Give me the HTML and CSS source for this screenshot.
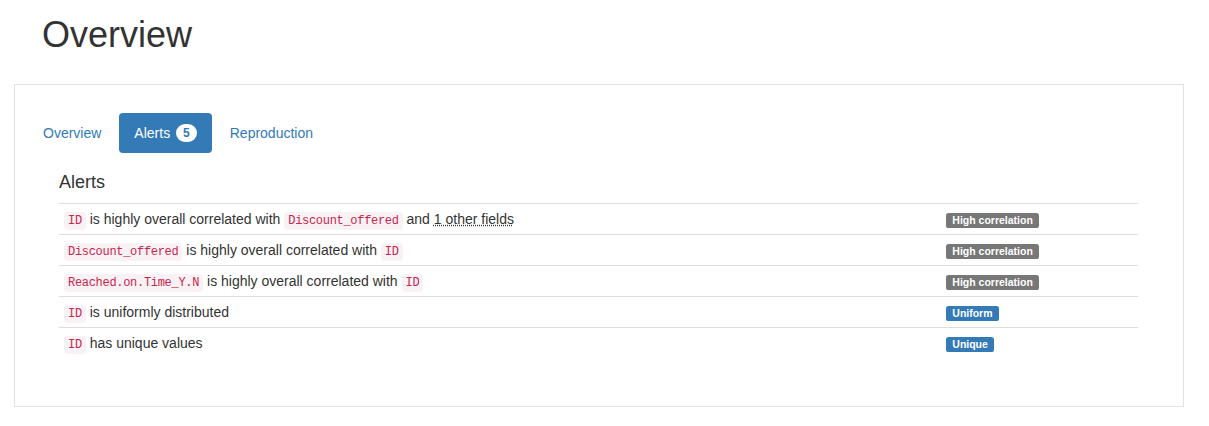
FILE: index.html
```html
<!DOCTYPE html>
<html lang="en">
<head>
<meta charset="utf-8">
<title>Overview</title>
<link rel="stylesheet" href="styles.css">
</head>
<body>
<div class="page">
  <h1 class="page-title">Overview</h1>
  <div class="panel">
    <ul class="pills">
      <li><a class="pill" href="#">Overview</a></li>
      <li><a class="pill active" href="#">Alerts <span class="badge">5</span></a></li>
      <li><a class="pill" href="#">Reproduction</a></li>
    </ul>
    <div class="tab-content">
      <h4 class="section-title">Alerts</h4>
      <table class="alerts">
        <tbody>
          <tr>
            <td class="msg"><code>ID</code> is highly overall correlated with <code>Discount_offered</code> and <abbr title="Reached.on.Time_Y.N">1 other fields</abbr></td>
            <td class="tag"><span class="label label-default">High correlation</span></td>
          </tr>
          <tr>
            <td class="msg"><code>Discount_offered</code> is highly overall correlated with <code>ID</code></td>
            <td class="tag"><span class="label label-default">High correlation</span></td>
          </tr>
          <tr>
            <td class="msg"><code>Reached.on.Time_Y.N</code> is highly overall correlated with <code>ID</code></td>
            <td class="tag"><span class="label label-default">High correlation</span></td>
          </tr>
          <tr>
            <td class="msg"><code>ID</code> is uniformly distributed</td>
            <td class="tag"><span class="label label-primary">Uniform</span></td>
          </tr>
          <tr>
            <td class="msg"><code>ID</code> has unique values</td>
            <td class="tag"><span class="label label-primary">Unique</span></td>
          </tr>
        </tbody>
      </table>
    </div>
  </div>
</div>
</body>
</html>
```

FILE: styles.css
```css
* { box-sizing: border-box; }

html, body {
  margin: 0;
  padding: 0;
  background: #fff;
}

body {
  font-family: "Liberation Sans", Arial, Helvetica, sans-serif;
  font-size: 14px;
  line-height: 1.42857143;
  color: #333;
}

.page {
  padding: 15px 25px 0 14px;
}

.page-title {
  margin: 0 0 29px 28px;
  font-size: 36px;
  font-weight: 500;
  line-height: 1.1;
  color: #333;
}

.panel {
  width: 1170px;
  height: 323px;
  border: 1px solid #e1e1e6;
  padding: 28px 0 0 13px;
}

.pills {
  list-style: none;
  margin: 0;
  padding: 0;
  display: flex;
}

.pills li + li {
  margin-left: 3px;
}

.pill {
  display: block;
  padding: 10px 15px;
  line-height: 20px;
  border-radius: 4px;
  color: #337ab7;
  text-decoration: none;
}

.pill.active {
  background: #337ab7;
  color: #fff;
}

.badge {
  display: inline-block;
  min-width: 10px;
  padding: 3px 7px;
  font-size: 12px;
  font-weight: bold;
  line-height: 1;
  color: #337ab7;
  background: #fff;
  border-radius: 10px;
  text-align: center;
  vertical-align: middle;
  position: relative;
  top: -1px;
  margin-left: 2px;
}

.tab-content {
  padding: 10px 0 0 31px;
  width: 1110px;
}

.section-title {
  margin: 10px 0 10px 0;
  font-size: 18px;
  font-weight: 500;
  line-height: 1.1;
  color: #333;
}

.alerts {
  width: 1079px;
  border-collapse: collapse;
  border-spacing: 0;
}

.alerts td {
  padding: 5px;
  height: 31px;
  line-height: 20px;
  border-top: 1px solid #ddd;
  vertical-align: top;
}

.alerts td.tag {
  width: 197px;
}

code {
  font-family: "Liberation Mono", "Courier New", monospace;
  font-size: 12px;
  line-height: 1;
  letter-spacing: -0.3px;
  padding: 2px 4px;
  color: #c7254e;
  background: #f9f2f4;
  border-radius: 4px;
}

abbr {
  text-decoration: underline dotted;
  cursor: help;
}

.label {
  display: inline-block;
  padding: 0.2em 0.6em 0.3em;
  font-size: 10.5px;
  font-weight: bold;
  line-height: 1;
  color: #fff;
  text-align: center;
  white-space: nowrap;
  vertical-align: baseline;
  border-radius: 0.25em;
}

.label-default { background: #777; }
.label-primary { background: #337ab7; }
```
